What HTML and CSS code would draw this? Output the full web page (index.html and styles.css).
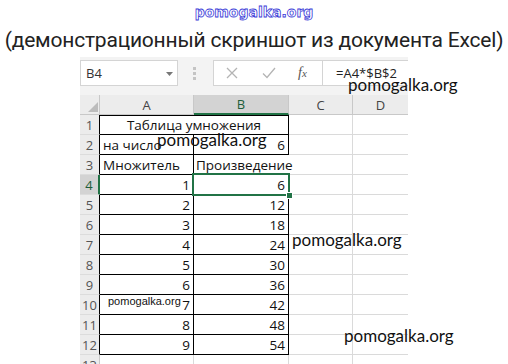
FILE: index.html
```html
<!DOCTYPE html>
<html lang="ru">
<head>
<meta charset="utf-8">
<link rel="stylesheet" href="styles.css">
</head>
<body>
<div class="page">
  <div class="wm-top">pomogalka.org</div>
  <div class="title">(демонстрационный скриншот из документа Excel)</div>
  <div class="excel">
    <div class="fbar">
      <div class="namebox">
        <span class="nb-text">B4</span>
        <svg class="dd" width="7" height="4" viewBox="0 0 7 4"><path d="M0 0h7L3.5 4z" fill="#777"/></svg>
      </div>
      <div class="grip">
        <svg width="3" height="13" viewBox="0 0 3 13"><g fill="#c4c4c4"><rect x="0" y="0" width="3" height="3"/><rect x="0" y="5" width="3" height="3"/><rect x="0" y="10" width="3" height="3"/></g></svg>
      </div>
      <div class="fbox">
        <div class="ficons">
          <svg class="ic" width="12" height="12" viewBox="0 0 12 12"><path d="M1 1L11 11M11 1L1 11" stroke="#b4b4b4" stroke-width="1.3" fill="none"/></svg>
          <svg class="ic" width="14" height="12" viewBox="0 0 14 12"><path d="M1 6.5L5 10.5L13 1" stroke="#b4b4b4" stroke-width="1.3" fill="none"/></svg>
          <span class="fx">f<span class="fx-x">x</span></span>
        </div>
        <div class="ftext">=A4*$B$2</div>
      </div>
    </div>
    <div class="sheet">
      <div class="c corner"><svg width="10" height="10" viewBox="0 0 10 10"><path d="M10 0V10H0z" fill="#bcbcbc"/></svg></div>
      <div class="c ch">A</div>
      <div class="c ch sel">B</div>
      <div class="c ch">C</div>
      <div class="c ch last">D</div>

      <div class="c rh tb">1</div>
      <div class="c t span2 center top">Таблица умножения</div>
      <div class="c g"></div>
      <div class="c g last"></div>

      <div class="c rh tb">2</div>
      <div class="c t a">на число</div>
      <div class="c t b num">6</div>
      <div class="c g"></div>
      <div class="c g last"></div>

      <div class="c rh tb">3</div>
      <div class="c t a">Множитель</div>
      <div class="c t b3">Произведение</div>
      <div class="c g"></div>
      <div class="c g last"></div>

      <div class="c rh rsel">4</div>
      <div class="c t a num">1</div>
      <div class="c t b num active">6</div>
      <div class="c g"></div>
      <div class="c g last"></div>

      <div class="c rh tb">5</div>
      <div class="c t a num">2</div>
      <div class="c t b num">12</div>
      <div class="c g"></div>
      <div class="c g last"></div>

      <div class="c rh tb">6</div>
      <div class="c t a num">3</div>
      <div class="c t b num">18</div>
      <div class="c g"></div>
      <div class="c g last"></div>

      <div class="c rh tb">7</div>
      <div class="c t a num">4</div>
      <div class="c t b num">24</div>
      <div class="c g"></div>
      <div class="c g last"></div>

      <div class="c rh tb">8</div>
      <div class="c t a num">5</div>
      <div class="c t b num">30</div>
      <div class="c g"></div>
      <div class="c g last"></div>

      <div class="c rh tb">9</div>
      <div class="c t a num">6</div>
      <div class="c t b num">36</div>
      <div class="c g"></div>
      <div class="c g last"></div>

      <div class="c rh tb">10</div>
      <div class="c t a num">7</div>
      <div class="c t b num">42</div>
      <div class="c g"></div>
      <div class="c g last"></div>

      <div class="c rh tb">11</div>
      <div class="c t a num">8</div>
      <div class="c t b num">48</div>
      <div class="c g"></div>
      <div class="c g last"></div>

      <div class="c rh tb">12</div>
      <div class="c t a num">9</div>
      <div class="c t b num">54</div>
      <div class="c g"></div>
      <div class="c g last"></div>

      <div class="c rh">13</div>
      <div class="c g"></div>
      <div class="c g"></div>
      <div class="c g"></div>
      <div class="c g last"></div>
    </div>
  </div>

  <div class="wm wm1">pomogalka.org</div>
  <div class="wm wm2">pomogalka.org</div>
  <div class="wm wm3">pomogalka.org</div>
  <div class="wm wm4">pomogalka.org</div>
  <div class="wm-small">pomogalka.org</div>
</div>
</body>
</html>
```

FILE: styles.css
```css
html, body {
  margin: 0;
  padding: 0;
  background: #fff;
}
.page {
  position: relative;
  width: 508px;
  height: 364px;
  overflow: hidden;
}
.wm-top {
  height: 24px;
  line-height: 24px;
  text-align: center;
  font-family: "DejaVu Sans", Verdana, sans-serif;
  font-weight: bold;
  font-size: 14px;
  color: #fff;
  -webkit-text-stroke: 0.8px #3a3ad8;
}
.title {
  height: 33px;
  line-height: 33px;
  text-align: center;
  font-family: Roboto, "Liberation Sans", sans-serif;
  font-size: 21px;
  letter-spacing: -0.2px;
  color: #222;
  white-space: nowrap;
}
.excel {
  margin-left: 80px;
  width: 328px;
  font-family: "Open Sans", "Liberation Sans", sans-serif;
}
.fbar {
  height: 38px;
  background: #f3f3f3;
  display: flex;
  align-items: flex-start;
  box-sizing: border-box;
  padding-top: 3px;
}
.namebox {
  width: 98px;
  height: 26px;
  box-sizing: border-box;
  background: #fff;
  border: 1px solid #d4d4d4;
  display: flex;
  align-items: center;
  justify-content: space-between;
  padding: 0 4px 0 5px;
  font-size: 13px;
  color: #333;
}
.dd {
  margin-top: 1px;
}
.grip {
  width: 35px;
  height: 26px;
  display: flex;
  align-items: center;
  justify-content: center;
  padding-right: 2px;
  box-sizing: border-box;
}
.fbox {
  flex: 1;
  height: 26px;
  box-sizing: border-box;
  background: #fff;
  border: 1px solid #d4d4d4;
  border-right: none;
  display: flex;
  align-items: center;
}
.ficons {
  width: 109px;
  height: 100%;
  box-sizing: border-box;
  border-right: 1px solid #d4d4d4;
  display: flex;
  align-items: center;
  padding-left: 12px;
  gap: 24px;
}
.ic {
  display: block;
}
.fx {
  font-family: "Liberation Serif", serif;
  font-style: italic;
  font-size: 14px;
  color: #555;
  margin-left: -2px;
}
.fx-x {
  font-size: 11px;
}
.ftext {
  padding-left: 13px;
  font-size: 13px;
  color: #222;
}
.sheet {
  display: grid;
  grid-template-columns: 20px 94px 95px 64px 55px;
  grid-auto-rows: 20px;
  font-size: 13.5px;
  color: #111;
}
.c {
  box-sizing: border-box;
  border-right: 1px solid #dadada;
  border-bottom: 1px solid #dadada;
  display: flex;
  align-items: flex-end;
  line-height: 18px;
  padding: 0 3px;
  white-space: nowrap;
  overflow: visible;
}
.c.last {
  border-right: none;
}
.corner {
  background: #ececec;
  border-right: 1px solid #c8c8c8;
  border-bottom: 1px solid #c8c8c8;
  align-items: flex-end;
  justify-content: flex-end;
  padding: 0 1px 2px 0;
}
.ch {
  background: #ececec;
  border-right: 1px solid #c8c8c8;
  border-bottom: 1px solid #c8c8c8;
  justify-content: center;
  align-items: center;
  font-size: 13px;
  color: #444;
}
.ch.sel {
  background: #d3d3d3;
  border-bottom: 2px solid #217346;
  color: #1e5e3a;
}
.rh {
  background: #ececec;
  border-right: 1px solid #c8c8c8;
  border-bottom: 1px solid #dcdcdc;
  justify-content: center;
  align-items: center;
  font-size: 13px;
  color: #555;
  padding: 0;
}
.rh.tb {
  border-right: 1px solid #000;
}
.rh.rsel {
  background: #d3d3d3;
  border-right: 2px solid #217346;
  color: #1e5e3a;
}
.t {
  border-bottom: 1px solid #000;
}
.t.a {
  border-right: 1px solid #000;
}
.t.b {
  border-right: 1px solid #000;
}
.t.b3 {
  border-right: 1px solid #fff;
  padding-left: 2px;
  padding-right: 0;
}
.span2 {
  grid-column: span 2;
  border-right: 1px solid #000;
}
.top {
  border-top: 1px solid #000;
}
.center {
  justify-content: center;
}
.num {
  justify-content: flex-end;
}
.active {
  position: relative;
}
.active::after {
  content: "";
  position: absolute;
  left: -2px;
  top: -2px;
  right: -2px;
  bottom: -2px;
  border: 2px solid #217346;
}
.active::before {
  content: "";
  position: absolute;
  right: -5px;
  bottom: -5px;
  width: 5px;
  height: 5px;
  background: #217346;
  border: 1px solid #fff;
  z-index: 2;
}
.wm {
  position: absolute;
  font-family: Lato, "Open Sans", sans-serif;
  font-size: 17px;
  line-height: 20px;
  color: #111;
  white-space: nowrap;
}
.wm1 { left: 348px; top: 75px; }
.wm2 { left: 157px; top: 130px; }
.wm3 { left: 292px; top: 230px; }
.wm4 { left: 344px; top: 326px; }
.wm-small {
  position: absolute;
  left: 108px;
  top: 295px;
  font-family: "Liberation Sans", Arial, sans-serif;
  font-size: 11px;
  line-height: 13px;
  color: #111;
}
```
